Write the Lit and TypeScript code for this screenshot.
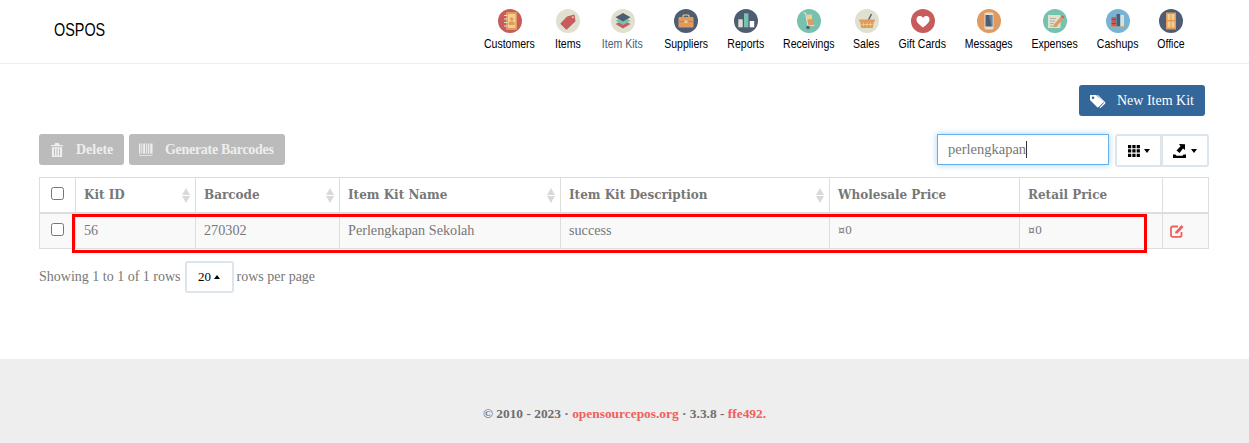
import { LitElement, html, css, svg } from "lit";
import { customElement } from "lit/decorators.js";

// label widths are measured from the reference, the narrow face is faked with scaleX
const NAV: [string, number, ReturnType<typeof svg>][] = [
  ["Customers", 51, svg`<circle cx="12" cy="12" r="12" fill="#c75c5c"/><rect x="8" y="3" width="11" height="18" rx="1" fill="#e0995e"/><rect x="10" y="5" width="7.500" height="14" fill="#f5cf87"/><circle cx="13.700" cy="10" r="1.800" fill="#e0995e"/><path d="M10.800 16v-1.800c0-1.200 1.300-1.900 2.900-1.900s2.900.7 2.900 1.900V16z" fill="#e0995e"/><path d="M6 6.500h3.500M6 10h3.500M6 13.500h3.500M6 17h3.500" stroke="#e0e0d1" stroke-width="1"/>`],
  ["Items", 26, svg`<circle cx="12" cy="12" r="12" fill="#e0e0d1"/><path d="M11 7.500l7.500-2 1 6.800-8.300 8a1 1 0 0 1-1.400 0l-5-5a1 1 0 0 1 0-1.400z" fill="#c75c5c"/><circle cx="16.800" cy="8.300" r="1" fill="#e0e0d1"/>`],
  ["Item Kits", 43, svg`<circle cx="12" cy="12" r="12" fill="#e0e0d1"/><path d="M12 11l7.500 4-7.500 4.500L4.500 15z" fill="#c75c5c"/><path d="M12 7.500l7.500 4.200-7.500 4.300-7.500-4.300z" fill="#76c2af"/><path d="M12 4l7.500 4.200-7.500 4.300-7.500-4.300z" fill="#4f5d73"/>`],
  ["Suppliers", 44, svg`<circle cx="12" cy="12" r="12" fill="#4f5d73"/><rect x="9" y="6" width="6" height="3" rx="1" fill="none" stroke="#f5cf87" stroke-width="1.200"/><rect x="4.500" y="8" width="15" height="10.500" rx="1" fill="#e0995e"/><rect x="4.500" y="12" width="15" height="1" fill="#c9803f"/><rect x="10.500" y="11.500" width="3" height="2.500" fill="#f5cf87"/>`],
  ["Reports", 36, svg`<circle cx="12" cy="12" r="12" fill="#4f5d73"/><rect x="4.300" y="10.300" width="4.400" height="8" fill="#e0e0d1"/><rect x="10" y="4.300" width="4.400" height="14" fill="#76c2af"/><rect x="15.700" y="12" width="4.500" height="6.300" fill="#fff"/>`],
  ["Receivings", 50, svg`<circle cx="12" cy="12" r="12" fill="#76c2af"/><rect x="10" y="5.500" width="5" height="5" fill="#f5cf87"/><rect x="11" y="10.500" width="6" height="5.500" fill="#e0995e"/><path d="M6.500 4h2l2.500 13 6.500-.8" fill="none" stroke="#e0e0d1" stroke-width="1.100"/><circle cx="11" cy="18.500" r="1.800" fill="#4f5d73"/>`],
  ["Sales", 25, svg`<circle cx="12" cy="12" r="12" fill="#e0e0d1"/><path d="M13.500 11l3-6" stroke="#4f5d73" stroke-width="1.400"/><path d="M4 10.500h16v2h-1.200l-1 6.500H6.200l-1-6.500H4z" fill="#e0995e"/><path d="M8.500 13.500v4M12 13.500v4M15.500 13.500v4M6.500 15.500h11" stroke="#f5cf87" stroke-width=".8"/>`],
  ["Gift Cards", 47, svg`<circle cx="12" cy="12" r="12" fill="#c75c5c"/><path d="M12 18.500c-4.500-3.500-6.500-5.500-6.500-8a3.400 3.400 0 0 1 6.500-1.500 3.400 3.400 0 0 1 6.500 1.500c0 2.500-2 4.500-6.500 8z" fill="#fff"/>`],
  ["Messages", 46, svg`<circle cx="12" cy="12" r="12" fill="#e0995e"/><rect x="7.500" y="3.500" width="9" height="17" rx="1.500" fill="#e0e0d1"/><rect x="8.500" y="6" width="7" height="11.500" fill="#4f5d73"/><path d="M12 6h3.500v11.500h-1z" fill="#77b3d4" opacity=".5"/>`],
  ["Expenses", 45, svg`<circle cx="12" cy="12" r="12" fill="#76c2af"/><rect x="5" y="6" width="12.500" height="13" fill="#e0e0d1"/><path d="M7 9.500h6M7 12h5M7 14.500h4M7 17h8" stroke="#a5a594" stroke-width=".8"/><path d="M11 15.500l7-8 2.500 2-7 8-3 .8z" fill="#e0995e"/><path d="M18 7.500l1-1.200 2.500 2-1 1.200z" fill="#c75c5c"/>`],
  ["Cashups", 41, svg`<circle cx="12" cy="12" r="12" fill="#77b3d4"/><rect x="5.500" y="8" width="4.500" height="9.500" fill="#c75c5c"/><rect x="5.500" y="10" width="4.500" height="1" fill="#4f5d73"/><rect x="5.500" y="14" width="4.500" height="1" fill="#4f5d73"/><rect x="10.500" y="5" width="3.500" height="12.500" fill="#4f5d73"/><rect x="14.500" y="6" width="3.500" height="11.500" fill="#e0e0d1"/><rect x="4" y="17.500" width="16.500" height="1.500" fill="#e0995e"/>`],
  ["Office", 26, svg`<circle cx="12" cy="12" r="12" fill="#4f5d73"/><rect x="7" y="3.500" width="10" height="17" fill="#e0995e"/><rect x="8.500" y="5" width="3" height="6" fill="#f5cf87"/><rect x="12.500" y="5" width="3" height="6" fill="#f5cf87"/><rect x="8.500" y="12.500" width="3" height="6" fill="#f5cf87"/><rect x="12.500" y="12.500" width="3" height="6" fill="#f5cf87"/>`],
];

const COLUMNS = [
  { label: "Kit ID", sort: true },
  { label: "Barcode", sort: true },
  { label: "Item Kit Name", sort: true },
  { label: "Item Kit Description", sort: true },
  { label: "Wholesale Price", sort: false },
  { label: "Retail Price", sort: false },
];

const ROW = ["56", "270302", "Perlengkapan Sekolah", "success", "¤0", "¤0"];

@customElement("app-root")
export class AppRoot extends LitElement {
  static styles = css`
    :host {
      display: block;
      height: 443px;
      overflow: hidden;
      background: #fff;
      font-family: "Liberation Serif", "DejaVu Serif", serif;
      font-size: 14px;
      color: #777;
    }

    .topbar {
      height: 64px;
      box-sizing: border-box;
      border-bottom: 1px solid #eee;
      display: flex;
      align-items: flex-start;
      justify-content: space-between;
      padding: 0 65px 0 54px;
    }

    .brand {
      margin-top: 19px;
      font-family: "Liberation Sans", sans-serif;
      font-size: 18px;
      line-height: 22px;
      color: #000;
      transform: scaleX(0.8);
      transform-origin: left center;
    }

    nav {
      display: flex;
      margin-top: 9px;
      gap: 20px;
    }

    .nav-item {
      display: flex;
      flex-direction: column;
      align-items: center;
      font-family: "Liberation Sans", sans-serif;
      font-size: 13px;
      line-height: 16px;
      color: #000;
      white-space: nowrap;
    }

    .nav-item.active {
      color: #4f5d73;
    }

    .nav-item svg {
      width: 24px;
      height: 24px;
      margin-bottom: 3px;
      display: block;
      flex: none;
    }

    .nav-item span {
      transform: scaleX(0.81);
      transform-origin: center;
    }

    main {
      padding: 21px 40px 0 39px;
      height: 295px;
      box-sizing: border-box;
    }

    .actions {
      display: flex;
      justify-content: flex-end;
      padding-right: 4px;
    }

    .btn {
      display: inline-flex;
      align-items: center;
      box-sizing: border-box;
      height: 31px;
      border-radius: 3px;
      color: #fff;
      white-space: nowrap;
    }

    .btn svg {
      display: block;
      fill: currentColor;
      flex: none;
    }

    .btn-primary {
      background: #336699;
      padding: 0 11px;
      gap: 9px;
      width: 126px;
    }

    .toolbar {
      display: flex;
      justify-content: space-between;
      align-items: flex-start;
      margin-top: 18px;
    }

    .toolbar-left,
    .toolbar-right {
      display: flex;
    }

    .toolbar-left {
      gap: 5px;
    }

    .btn-disabled {
      background: #bbb;
      color: #eee;
      padding: 0 11px 0 12px;
      gap: 13px;
      font-weight: 700;
    }

    .btn-delete {
      width: 85px;
    }

    .btn-barcodes {
      width: 156px;
      padding-left: 10px;
      gap: 12px;
      letter-spacing: -0.3px;
    }

    .search {
      width: 172px;
      height: 31px;
      box-sizing: border-box;
      border: 1px solid #66afe9;
      box-shadow: 0 0 6px rgba(102, 175, 233, 0.6);
      display: flex;
      align-items: center;
      padding-left: 10px;
      margin-right: 6px;
      font-size: 14.5px;
    }

    .caret {
      display: inline-block;
      width: 1px;
      height: 17px;
      background: #333;
    }

    .tool {
      box-sizing: border-box;
      height: 33px;
      border: 2px solid #dce4ec;
      background: #fff;
      display: flex;
      align-items: center;
      justify-content: center;
      gap: 4px;
      color: #000;
    }

    .tool + .tool {
      margin-left: -1px;
    }

    .tool-cols {
      width: 47px;
      border-radius: 3px 0 0 3px;
    }

    .tool-export {
      width: 48px;
      border-radius: 0 3px 3px 0;
    }

    .arrow-down,
    .arrow-up {
      display: inline-block;
      width: 0;
      height: 0;
      border-left: 3.5px solid transparent;
      border-right: 3.5px solid transparent;
    }

    .arrow-down {
      border-top: 4px solid #000;
    }

    .arrow-up {
      border-bottom: 4px solid #000;
    }

    table {
      border-collapse: collapse;
      table-layout: fixed;
      width: 1170px;
      margin-top: 10px;
    }

    th,
    td {
      border: 1px solid #ddd;
      padding: 0 8px;
      text-align: left;
      box-sizing: border-box;
      white-space: nowrap;
    }

    th {
      height: 35px;
      border-bottom-width: 2px;
      font-family: "DejaVu Serif", serif;
      font-size: 12px;
      font-weight: 700;
      position: relative;
    }

    td {
      height: 36px;
      background: #f9f9f9;
      font-size: 14.2px;
    }

    td.price {
      font-family: "DejaVu Serif", serif;
      font-size: 11px;
    }

    .center {
      text-align: center;
      padding: 0;
    }

    .check {
      display: inline-block;
      box-sizing: border-box;
      width: 13px;
      height: 13px;
      border: 1px solid #767676;
      border-radius: 2.5px;
      background: #fff;
      vertical-align: middle;
      margin-top: -4px;
    }

    td.edit {
      padding-left: 7px;
    }

    .edit svg {
      display: block;
    }

    .sort {
      position: absolute;
      right: 5px;
      top: 10px;
      display: flex;
      flex-direction: column;
      gap: 1px;
    }

    .sort i {
      display: block;
      width: 0;
      height: 0;
      border-left: 4px solid transparent;
      border-right: 4px solid transparent;
    }

    .sort i:first-child {
      border-bottom: 7px solid #d9d9d9;
    }

    .sort i:last-child {
      border-top: 7px solid #d9d9d9;
    }

    .highlight {
      position: absolute;
      left: 72px;
      top: 214px;
      width: 1075px;
      height: 39px;
      box-sizing: border-box;
      border: 3px solid #f00;
      pointer-events: none;
    }

    .pagination {
      display: flex;
      align-items: center;
      margin-top: 12px;
    }

    .page-size {
      box-sizing: border-box;
      width: 49px;
      height: 32px;
      border: 2px solid #dce4ec;
      border-radius: 3px;
      display: flex;
      align-items: center;
      justify-content: center;
      gap: 3px;
      margin: 0 3px 0 4px;
      color: #000;
      font-size: 13px;
    }

    footer {
      height: 84px;
      background: #eee;
      display: flex;
      justify-content: center;
      padding-top: 47px;
      box-sizing: border-box;
      font-size: 13.4px;
      font-weight: 700;
      line-height: 16px;
      color: #6e6e6e;
    }

    footer span {
      color: #f0605c;
    }

    .page {
      position: relative;
    }
  `;

  render() {
    return html`
      <div class="page">
        <header class="topbar">
          <div class="brand">OSPOS</div>
          <nav>
            ${NAV.map(
              ([label, width, icon]) => html`
                <div
                  class="nav-item ${label === "Item Kits" ? "active" : ""}"
                  style="width: ${width}px"
                >
                  <svg viewBox="0 0 24 24">${icon}</svg>
                  <span>${label}</span>
                </div>
              `
            )}
          </nav>
        </header>
        <main>
          <div class="actions">
            <div class="btn btn-primary">
              <svg width="18" height="14" viewBox="0 0 18 14">
                <path d="M0 1.500V6l7 7c.5.5 1.200.5 1.700 0l4.300-4.300c.5-.5.5-1.200 0-1.700L6 1H1C.4 1 0 1 0 1.500zM3 5a1.300 1.300 0 1 1 0-2.600A1.300 1.300 0 0 1 3 5z" />
                <path d="M8 1l7 7c.5.5.5 1.200 0 1.700L10.500 14l-1-.5 4-4.300c.3-.4.3-.8 0-1.200L7 1z" />
              </svg>
              New Item Kit
            </div>
          </div>
          <div class="toolbar">
            <div class="toolbar-left">
              <div class="btn btn-disabled btn-delete">
                <svg width="12" height="14" viewBox="0 0 13 15">
                  <path d="M4.500 0h4l1 2H13v1.500H0V2h3.500zM1 4.500h11V15H1zM3.200 6v7.500h1V6zM6 6v7.500h1V6zM8.800 6v7.500h1V6z" />
                </svg>
                Delete
              </div>
              <div class="btn btn-disabled btn-barcodes">
                <svg width="14" height="14" viewBox="0 0 15 14">
                  <path d="M0 0h1.500v11H0zM2.500 0h1v11h-1zM4.500 0h2v11h-2zM7.500 0h1v11h-1zM9.500 0h1.500v11H9.500zM12 0h2.500v11H12zM0 12.500h14.500v1H0z" />
                </svg>
                Generate Barcodes
              </div>
            </div>
            <div class="toolbar-right">
              <div class="search"><span>perlengkapan</span><i class="caret"></i></div>
              <div class="tool tool-cols">
                <svg width="12" height="12" viewBox="0 0 13 13">
                  <path d="M0 0h3.500v3.500H0zM4.700 0h3.500v3.500H4.700zM9.400 0h3.500v3.500H9.400zM0 4.700h3.500v3.500H0zM4.700 4.700h3.500v3.500H4.700zM9.400 4.700h3.500v3.500H9.400zM0 9.400h3.500v3.500H0zM4.700 9.400h3.500v3.500H4.700zM9.400 9.400h3.500v3.500H9.400z" />
                </svg>
                <i class="arrow-down"></i>
              </div>
              <div class="tool tool-export">
                <svg width="14" height="14" viewBox="0 0 14 14">
                  <path d="M0 10.500h2.500l1 1.200h6l1-1.200H13V14H0z" />
                  <path d="M6 0l6 .2L12 6 10 4.500 6.500 9l-3-2.500L7.500 2.200z" />
                </svg>
                <i class="arrow-down"></i>
              </div>
            </div>
          </div>
          <table>
            <colgroup>
              <col style="width: 36px" />
              <col style="width: 120px" />
              <col style="width: 144px" />
              <col style="width: 221px" />
              <col style="width: 269px" />
              <col style="width: 190px" />
              <col style="width: 143px" />
              <col />
            </colgroup>
            <thead>
              <tr>
                <th class="center"><i class="check"></i></th>
                ${COLUMNS.map(
                  (c) => html`<th>
                    ${c.label}
                    ${c.sort ? html`<div class="sort"><i></i><i></i></div>` : ""}
                  </th>`
                )}
                <th></th>
              </tr>
            </thead>
            <tbody>
              <tr>
                <td class="center"><i class="check"></i></td>
                ${ROW.map((v) => html`<td class=${v.startsWith("¤") ? "price" : ""}>${v}</td>`)}
                <td class="edit">
                  <svg width="14" height="14" viewBox="0 0 14 14" fill="none" stroke="#f0605c" stroke-width="1.800">
                    <path d="M11.500 8v3.200c0 1-.7 1.700-1.700 1.700H2.700c-1 0-1.700-.7-1.700-1.700V4.200c0-1 .7-1.700 1.700-1.700H8" />
                    <path d="M5 9.500l.5-2L11.500 1 13.500 3l-6 6.500z" fill="#f0605c" stroke="none" />
                  </svg>
                </td>
              </tr>
            </tbody>
          </table>
          <div class="pagination">
            Showing 1 to 1 of 1 rows
            <div class="page-size">20 <i class="arrow-up"></i></div>
            rows per page
          </div>
        </main>
        <footer>
          © 2010 - 2023 ·&nbsp;<span>opensourcepos.org</span>&nbsp;· 3.3.8 -&nbsp;<span>ffe492.</span>
        </footer>
        <div class="highlight"></div>
      </div>
    `;
  }
}
